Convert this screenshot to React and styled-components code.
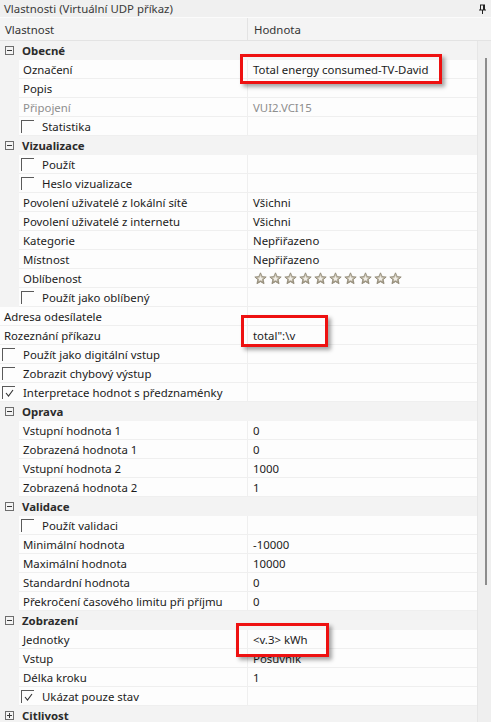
import React from "react";
import styled, { createGlobalStyle } from "styled-components";

const GlobalStyle = createGlobalStyle`
  html, body {
    margin: 0;
    padding: 0;
    background: #f0f0f0;
  }
  * {
    box-sizing: border-box;
  }
`;

const NAME_COL = 248;
const GUTTER = 19;

const Panel = styled.div`
  position: relative;
  width: 491px;
  height: 722px;
  overflow: hidden;
  background: #f0f0f0;
  font-family: "Noto Sans", "Open Sans", sans-serif;
  font-size: 11.4px;
  color: #1b1b1b;
`;

const TitleBar = styled.div`
  height: 18px;
  display: flex;
  align-items: center;
  justify-content: space-between;
  padding: 0 4px 0 4px;
  background: #f0f0f0;
  border-bottom: 1px solid #fbfbfb;
  color: #3a3a3a;
`;

const Header = styled.div`
  height: 23px;
  display: flex;
  background: #f4f4f4;
  border-bottom: 1px solid #e3e3e3;
  color: #333;
`;

const HeaderCell = styled.div`
  display: flex;
  align-items: center;
  padding-left: ${({ $pad }) => $pad}px;
  width: ${({ $width }) => ($width ? `${$width}px` : "auto")};
  flex: ${({ $width }) => ($width ? "none" : 1)};
  border-right: ${({ $divider }) => ($divider ? "1px solid #e3e3e3" : "none")};
`;

const Body = styled.div`
  display: flex;
`;

const Grid = styled.div`
  flex: 1;
  display: flex;
  flex-direction: column;
  border-right: 1px solid #e6e6e6;
`;

const Scrollbar = styled.div`
  width: 13px;
  background: #efefef;
  display: flex;
  justify-content: center;
  padding-top: 17px;
`;

const Thumb = styled.div`
  width: 2px;
  height: 527px;
  background: #8c8c8c;
  margin-left: 2px;
`;

const CategoryRow = styled.div`
  height: 19px;
  display: flex;
  align-items: center;
  background: #f3f3f3;
  font-weight: 700;
  color: #2b2b2b;
`;

const ExpandBox = styled.span`
  width: 9px;
  height: 9px;
  margin: 0 8px 0 5px;
  border: 1px solid #6d6d6d;
  position: relative;
  flex: none;
  &::before {
    content: "";
    position: absolute;
    left: 1px;
    right: 1px;
    top: 3px;
    height: 1px;
    background: #3a3a3a;
  }
  &::after {
    content: "";
    display: ${({ $collapsed }) => ($collapsed ? "block" : "none")};
    position: absolute;
    top: 1px;
    bottom: 1px;
    left: 3px;
    width: 1px;
    background: #3a3a3a;
  }
`;

const Row = styled.div`
  height: 19px;
  display: flex;
  background: ${({ $indent }) => ($indent ? "#f3f3f3" : "#fdfdfd")};
`;

const NameCell = styled.div`
  width: ${({ $width }) => $width}px;
  flex: none;
  display: flex;
  align-items: center;
  padding-left: ${({ $check }) => ($check ? 2 : 4)}px;
  background: #fdfdfd;
  border-bottom: 1px solid #efefef;
  border-right: 1px solid #efefef;
  margin-left: ${({ $indent }) => ($indent ? GUTTER : 0)}px;
  color: ${({ $disabled }) => ($disabled ? "#8e8e8e" : "inherit")};
  white-space: nowrap;
`;

const ValueCell = styled.div`
  flex: 1;
  display: flex;
  align-items: center;
  padding-left: 5px;
  background: #fdfdfd;
  border-bottom: 1px solid #efefef;
  color: ${({ $disabled }) => ($disabled ? "#8e8e8e" : "inherit")};
  white-space: nowrap;
`;

const CheckBox = styled.span`
  width: 13px;
  height: 13px;
  margin-right: 8px;
  flex: none;
  border-top: 1px solid #5a5a5a;
  border-left: 1px solid #5a5a5a;
  display: flex;
  align-items: center;
  justify-content: center;
  align-self: flex-start;
  margin-top: 3px;
`;

const Stars = styled.div`
  display: flex;
  gap: 2px;
  padding-left: 1px;
`;

const Callout = styled.div`
  position: absolute;
  left: ${({ $x }) => $x}px;
  top: ${({ $y }) => $y}px;
  width: ${({ $w }) => $w}px;
  height: ${({ $h }) => $h}px;
  border: 3px solid #ee1111;
  box-shadow: 3px 3px 4px rgba(0, 0, 0, 0.35);
  pointer-events: none;
`;

const PinIcon = () => (
  <svg width="9" height="10" viewBox="0 0 9 10">
    <path d="M2 1h5M2.5 1v5M6.5 1v5M1 6h7M4.5 6v4M5.5 1v5" stroke="#222" strokeWidth="1" fill="none" />
  </svg>
);

const Tick = () => (
  <svg width="11" height="11" viewBox="0 0 11 11">
    <polyline points="2,5 4.5,8 9,2" stroke="#333" strokeWidth="1.1" fill="none" />
  </svg>
);

const Star = () => (
  <svg width="13" height="13" viewBox="0 0 24 24">
    <defs>
      <linearGradient id="starFill" x1="0" y1="0" x2="0" y2="1">
        <stop offset="0" stopColor="#d8d2c2" />
        <stop offset="1" stopColor="#9e9682" />
      </linearGradient>
    </defs>
    <path
      d="M12 1.5l3.1 7 7.4.7-5.6 5 1.7 7.4L12 17.8l-6.6 3.8 1.7-7.4-5.6-5 7.4-.7z"
      fill="url(#starFill)"
      stroke="#857d6a"
      strokeWidth="1.4"
      strokeLinejoin="round"
    />
    <path d="M12 7l1.6 3.4 3.6.4-2.7 2.4.8 3.6L12 15l-3.3 1.8.8-3.6-2.7-2.4 3.6-.4z" fill="#f2efe8" />
  </svg>
);

const sections = [
  {
    title: "Obecné",
    rows: [
      { name: "Označení", value: "Total energy consumed-TV-David" },
      { name: "Popis", value: "" },
      { name: "Připojení", value: "VUI2.VCI15", disabled: true },
      { name: "Statistika", check: false },
    ],
  },
  {
    title: "Vizualizace",
    rows: [
      { name: "Použít", check: false },
      { name: "Heslo vizualizace", check: false },
      { name: "Povolení uživatelé z lokální sítě", value: "Všichni" },
      { name: "Povolení uživatelé z internetu", value: "Všichni" },
      { name: "Kategorie", value: "Nepřiřazeno" },
      { name: "Místnost", value: "Nepřiřazeno" },
      { name: "Oblíbenost", stars: 10 },
      { name: "Použít jako oblíbený", check: false },
    ],
  },
  {
    loose: true,
    rows: [
      { name: "Adresa odesílatele", value: "" },
      { name: "Rozeznání příkazu", value: 'total":\\v' },
      { name: "Použít jako digitální vstup", check: false },
      { name: "Zobrazit chybový výstup", check: false },
      { name: "Interpretace hodnot s předznaménky", check: true },
    ],
  },
  {
    title: "Oprava",
    rows: [
      { name: "Vstupní hodnota 1", value: "0" },
      { name: "Zobrazená hodnota 1", value: "0" },
      { name: "Vstupní hodnota 2", value: "1000" },
      { name: "Zobrazená hodnota 2", value: "1" },
    ],
  },
  {
    title: "Validace",
    rows: [
      { name: "Použít validaci", check: false },
      { name: "Minimální hodnota", value: "-10000" },
      { name: "Maximální hodnota", value: "10000" },
      { name: "Standardní hodnota", value: "0" },
      { name: "Překročení časového limitu při příjmu", value: "0" },
    ],
  },
  {
    title: "Zobrazení",
    rows: [
      { name: "Jednotky", value: "<v.3> kWh" },
      { name: "Vstup", value: "Posuvník" },
      { name: "Délka kroku", value: "1" },
      { name: "Ukázat pouze stav", check: true },
    ],
  },
  { title: "Citlivost", collapsed: true, rows: [] },
];

const PropertyRow = ({ row, indent }) => {
  const isCheck = row.check !== undefined;
  return (
    <Row $indent={indent}>
      <NameCell
        $indent={indent}
        $width={indent ? NAME_COL - GUTTER : NAME_COL}
        $check={isCheck}
        $disabled={row.disabled}
      >
        {isCheck && <CheckBox>{row.check && <Tick />}</CheckBox>}
        {row.name}
      </NameCell>
      <ValueCell $disabled={row.disabled}>
        {row.stars ? (
          <Stars>
            {Array.from({ length: row.stars }).map((_, i) => (
              <Star key={i} />
            ))}
          </Stars>
        ) : (
          row.value
        )}
      </ValueCell>
    </Row>
  );
};

const App = () => {
  return (
    <Panel>
      <GlobalStyle />
      <TitleBar>
        <span>Vlastnosti (Virtuální UDP příkaz)</span>
        <PinIcon />
      </TitleBar>
      <Header>
        <HeaderCell $width={NAME_COL} $pad={5} $divider>
          Vlastnost
        </HeaderCell>
        <HeaderCell $pad={6}>Hodnota</HeaderCell>
      </Header>
      <Body>
        <Grid>
          {sections.map((section, i) => (
            <React.Fragment key={i}>
              {section.title && (
                <CategoryRow>
                  <ExpandBox $collapsed={section.collapsed} />
                  {section.title}
                </CategoryRow>
              )}
              {section.rows.map((row) => (
                <PropertyRow key={row.name} row={row} indent={!section.loose} />
              ))}
            </React.Fragment>
          ))}
        </Grid>
        <Scrollbar>
          <Thumb />
        </Scrollbar>
      </Body>
      <Callout $x={240} $y={54} $w={202} $h={30} />
      <Callout $x={241} $y={315} $w={87} $h={32} />
      <Callout $x={236} $y={623} $w={93} $h={34} />
    </Panel>
  );
};

export default App;
